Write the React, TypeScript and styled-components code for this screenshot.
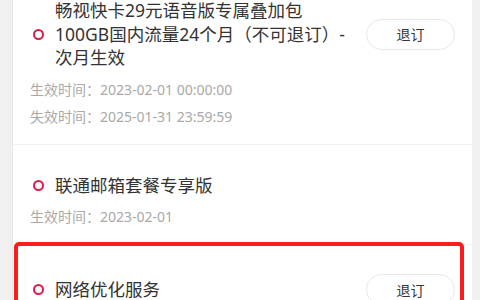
import React from "react";
import styled, { createGlobalStyle } from "styled-components";

const GlobalStyle = createGlobalStyle`
  html, body {
    margin: 0;
    padding: 0;
    background: #f0f0f0;
  }
  body {
    font-family: "Noto Sans", "Noto Sans CJK SC", sans-serif;
    -webkit-font-smoothing: antialiased;
  }
`;

const Viewport = styled.div`
  width: 480px;
  height: 300px;
  overflow: hidden;
  background: #f0f0f0;
  padding: 0 8px 0 12px;
  box-sizing: border-box;
`;

const Card = styled.div`
  background: #ffffff;
  margin-top: -30px;
  border-left: 1px solid #e9e9e9;
`;

const Item = styled.div<{ $last?: boolean }>`
  position: relative;
  padding: 29px 17px 17px 20px;
  border-bottom: ${(p) => (p.$last ? "none" : "1px solid #f1f1f1")};
`;

const Row = styled.div`
  display: flex;
  align-items: center;
`;

const Dot = styled.span`
  flex: none;
  width: 11px;
  height: 11px;
  box-sizing: border-box;
  border: 2.6px solid #d61f4a;
  border-radius: 50%;
  margin-right: 11px;
`;

const Title = styled.div`
  flex: 1;
  font-family: "Noto Sans", "Noto Sans CJK SC", sans-serif;
  font-size: 17.5px;
  line-height: 23.5px;
  color: #333333;
`;

const Line = styled.span`
  display: block;
  white-space: nowrap;
`;

const Button = styled.button`
  flex: none;
  width: 89px;
  height: 31px;
  margin-left: 10px;
  border: 1px solid #e8e8e8;
  border-radius: 16px;
  background: #ffffff;
  font-family: "Noto Sans", "Noto Sans CJK SC", sans-serif;
  font-size: 14px;
  color: #333333;
  padding: 0;
`;

const Metas = styled.div`
  display: flex;
  flex-direction: column;
  gap: 7px;
  margin-top: 10px;
  margin-left: -3px;
`;

const Meta = styled.div`
  font-family: "Noto Sans", "Noto Sans CJK SC", sans-serif;
  font-size: 14px;
  line-height: 20px;
  color: #a9a9a9;
  white-space: nowrap;
`;

const Highlight = styled.div`
  position: absolute;
  top: -3px;
  left: 1px;
  right: 8px;
  bottom: -20px;
  border: 4px solid #fb1d1d;
  border-radius: 5px;
  pointer-events: none;
`;

type Product = {
  lines: string[];
  cancellable: boolean;
  metas: string[];
  highlighted?: boolean;
};

const products: Product[] = [
  {
    lines: ["畅视快卡29元语音版专属叠加包", "100GB国内流量24个月（不可退订）-", "次月生效"],
    cancellable: true,
    metas: ["生效时间：2023-02-01 00:00:00", "失效时间：2025-01-31 23:59:59"],
  },
  {
    lines: ["联通邮箱套餐专享版"],
    cancellable: false,
    metas: ["生效时间：2023-02-01"],
  },
  {
    lines: ["网络优化服务"],
    cancellable: true,
    metas: ["生效时间：2023-02-01"],
    highlighted: true,
  },
];

export default function App() {
  return (
    <>
      <GlobalStyle />
      <Viewport>
        <Card>
          {products.map((p, i) => (
            <Item key={i} $last={i === products.length - 1}>
              <Row>
                <Dot />
                <Title>
                  {p.lines.map((l, j) => (
                    <Line key={j}>{l}</Line>
                  ))}
                </Title>
                {p.cancellable && <Button>退订</Button>}
              </Row>
              <Metas>
                {p.metas.map((m, j) => (
                  <Meta key={j}>{m}</Meta>
                ))}
              </Metas>
              {p.highlighted && <Highlight />}
            </Item>
          ))}
        </Card>
      </Viewport>
    </>
  );
}
